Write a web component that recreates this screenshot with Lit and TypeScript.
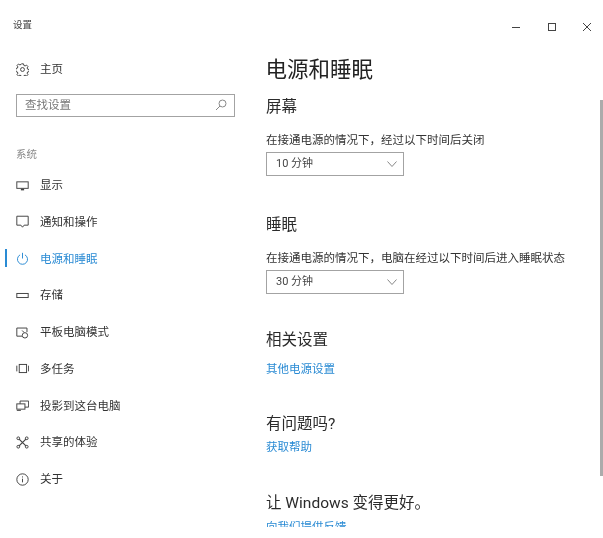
import { LitElement, html, css, svg } from "lit";
import { customElement } from "lit/decorators.js";

const g = (c: unknown) => html`<svg class="ico" viewBox="0 0 16 16" fill="none" stroke="currentColor" stroke-width="1.2">${c}</svg>`;

const icons: Record<string, unknown> = {
  gear: g(svg`<circle cx="8" cy="8" r="2.400"/><path d="M6.800 1h2.400l.5 2 1.500.6 1.800-1 1.700 1.700-1 1.800.6 1.500 2 .5v2.400l-2 .5-.6 1.500 1 1.800-1.700 1.700-1.800-1-1.500.6-.5 2H6.800l-.5-2-1.500-.6-1.800 1-1.700-1.700 1-1.800-.6-1.500-2-.5V6.800l2-.5.6-1.500-1-1.800 1.700-1.700 1.800 1 1.500-.6z"/>`),
  display: g(svg`<rect x="1" y="3.500" width="14" height="8"/><path d="M6 13h4" stroke-width="2"/>`),
  note: g(svg`<path d="M1 1.500h14v11H10L8 15l-2-2.500H1z"/>`),
  power: g(svg`<path d="M5 3.500a6.200 6.200 0 1 0 6 0M8 1v7"/>`),
  storage: g(svg`<rect x="1" y="5.500" width="14" height="5"/>`),
  tablet: g(svg`<path d="M7.500 12.500H1v-10h12.500V7.500"/><circle cx="11" cy="11.500" r="3.300"/><path d="M10 8 7.500 5.500"/>`),
  tasks: g(svg`<rect x="4" y="3" width="9" height="10"/><path d="M1 4.500v7M15.500 4.500v7"/>`),
  project: g(svg`<path d="M5 6V2.500h10.500v7.500H11"/><rect x="1" y="6" width="10" height="6.500"/><path d="M1 14h5"/>`),
  share: g(svg`<path d="M3.500 3.500 12.500 12.500M12.500 3.500 3.500 12.500" stroke-width="1.500"/><circle cx="2.800" cy="2.800" r="1.700"/><circle cx="13.200" cy="2.800" r="1.700"/><circle cx="2.800" cy="13.200" r="1.700"/><circle cx="13.200" cy="13.200" r="1.700"/>`),
  info: g(svg`<circle cx="8" cy="8" r="7"/><path d="M8 7v4.500M8 4.200v1.300"/>`),
};

const nav: [string, string, boolean?][] = [
  ["display", "显示"],
  ["note", "通知和操作"],
  ["power", "电源和睡眠", true],
  ["storage", "存储"],
  ["tablet", "平板电脑模式"],
  ["tasks", "多任务"],
  ["project", "投影到这台电脑"],
  ["share", "共享的体验"],
  ["info", "关于"],
];

@customElement("app-root")
export class AppRoot extends LitElement {
  static styles = css`
    :host {
      display: block;
      width: 603px;
      height: 538px;
      background: #fff;
      overflow: hidden;
      font-family: Roboto, "Noto Sans CJK SC", "Liberation Sans", sans-serif;
      color: #333;
      font-size: 11.5px;
      line-height: 16px;
    }
    .win {
      display: flex;
      height: 527px;
      overflow: hidden;
      filter: blur(0.5px);
    }
    .side {
      width: 266px;
      flex: none;
      display: flex;
      flex-direction: column;
    }
    .side > *, .main > * {
      flex-shrink: 0;
    }
    .app-title {
      font-size: 9.500px;
      padding: 17px 0 0 13px;
      color: #444;
    }
    .row {
      display: flex;
      align-items: center;
      height: 36.750px;
      padding-left: 16px;
      position: relative;
    }
    .home {
      margin-top: 18px;
    }
    .ico {
      width: 13px;
      height: 13px;
      flex: none;
      margin-right: 11px;
      color: #444;
    }
    .search {
      margin: 6px 0 0 16px;
      width: 219px;
      height: 23px;
      box-sizing: border-box;
      border: 1.500px solid #a3a3a3;
      display: flex;
      align-items: center;
      justify-content: space-between;
      padding: 0 7px 0 8px;
      color: #777;
    }
    .search svg {
      width: 12px;
      height: 12px;
      color: #888;
    }
    .group {
      margin: 30px 0 4px 16px;
      color: #888;
      font-size: 10.500px;
    }
    .row.active {
      color: #2a8bd4;
    }
    .row.active .ico {
      color: #2a8bd4;
    }
    .row.active::before {
      content: "";
      position: absolute;
      left: 5px;
      top: 9px;
      height: 18px;
      width: 1.500px;
      background: #2a8bd4;
    }
    .main {
      flex: 1;
      min-width: 0;
      display: flex;
      flex-direction: column;
      position: relative;
    }
    h1 {
      margin: 55px 0 0 -0.500px;
      font-size: 21.500px;
      font-weight: 400;
      line-height: 30px;
      color: #222;
    }
    h2 {
      margin: 0;
      font-size: 15.500px;
      font-weight: 400;
      line-height: 22px;
      color: #2b2b2b;
    }
    .s1 { margin-top: 11px; }
    .s2 { margin-top: 38px; }
    .s3 { margin-top: 35px; }
    .s4 { margin-top: 36px; }
    .s5 { margin-top: 37px; }
    .desc {
      margin: 14px 0 4px;
    }
    .select {
      width: 138px;
      height: 24px;
      box-sizing: border-box;
      border: 1.500px solid #a3a3a3;
      display: flex;
      align-items: center;
      justify-content: space-between;
      padding: 0 6px 0 9px;
      color: #444;
      font-size: 11px;
    }
    .select svg {
      width: 10px;
      height: 6px;
      color: #888;
    }
    a {
      color: #2a8bd4;
      display: block;
    }
    .l1 { margin-top: 10px; }
    .l2 { margin-top: 4px; }
    .l3 { margin-top: 5px; }
    .scroll {
      position: absolute;
      right: 0;
      top: 100px;
      width: 3px;
      height: 376px;
      background: #ababab;
    }
    .controls {
      position: absolute;
      top: 21.500px;
      right: 11px;
      display: flex;
      gap: 25.500px;
      color: #444;
    }
    .controls svg {
      width: 10px;
      height: 10px;
      display: block;
    }
  `;

  render() {
    return html`
      <div class="win">
        <aside class="side">
          <div class="app-title">设置</div>
          <div class="row home">${icons.gear}<span>主页</span></div>
          <div class="search">
            <span>查找设置</span>
            <svg viewBox="0 0 12 12" fill="none" stroke="currentColor"><circle cx="7.500" cy="4.500" r="3.500"/><path d="M5 7 1 11"/></svg>
          </div>
          <div class="group">系统</div>
          ${nav.map(
            ([i, t, a]) => html`<div class="row ${a ? "active" : ""}">${icons[i]}<span>${t}</span></div>`
          )}
        </aside>
        <main class="main">
          <h1>电源和睡眠</h1>
          <h2 class="s1">屏幕</h2>
          <div class="desc">在接通电源的情况下，经过以下时间后关闭</div>
          <div class="select">
            <span>10 分钟</span>
            <svg viewBox="0 0 10 6" fill="none" stroke="currentColor"><path d="M.5.500 5 5.500 9.500.500"/></svg>
          </div>
          <h2 class="s2">睡眠</h2>
          <div class="desc">在接通电源的情况下，电脑在经过以下时间后进入睡眠状态</div>
          <div class="select">
            <span>30 分钟</span>
            <svg viewBox="0 0 10 6" fill="none" stroke="currentColor"><path d="M.5.500 5 5.500 9.500.500"/></svg>
          </div>
          <h2 class="s3">相关设置</h2>
          <a class="l1">其他电源设置</a>
          <h2 class="s4">有问题吗?</h2>
          <a class="l2">获取帮助</a>
          <h2 class="s5">让 Windows 变得更好。</h2>
          <a class="l3">向我们提供反馈</a>
          <div class="scroll"></div>
          <div class="controls">
            <svg viewBox="0 0 10 10" stroke="currentColor" fill="none"><path d="M1 5.500h8"/></svg>
            <svg viewBox="0 0 10 10" stroke="currentColor" fill="none"><rect x="1.500" y="1.500" width="7" height="7"/></svg>
            <svg viewBox="0 0 10 10" stroke="currentColor" fill="none"><path d="M1 1l8 8M9 1l-8 8"/></svg>
          </div>
        </main>
      </div>
    `;
  }
}
